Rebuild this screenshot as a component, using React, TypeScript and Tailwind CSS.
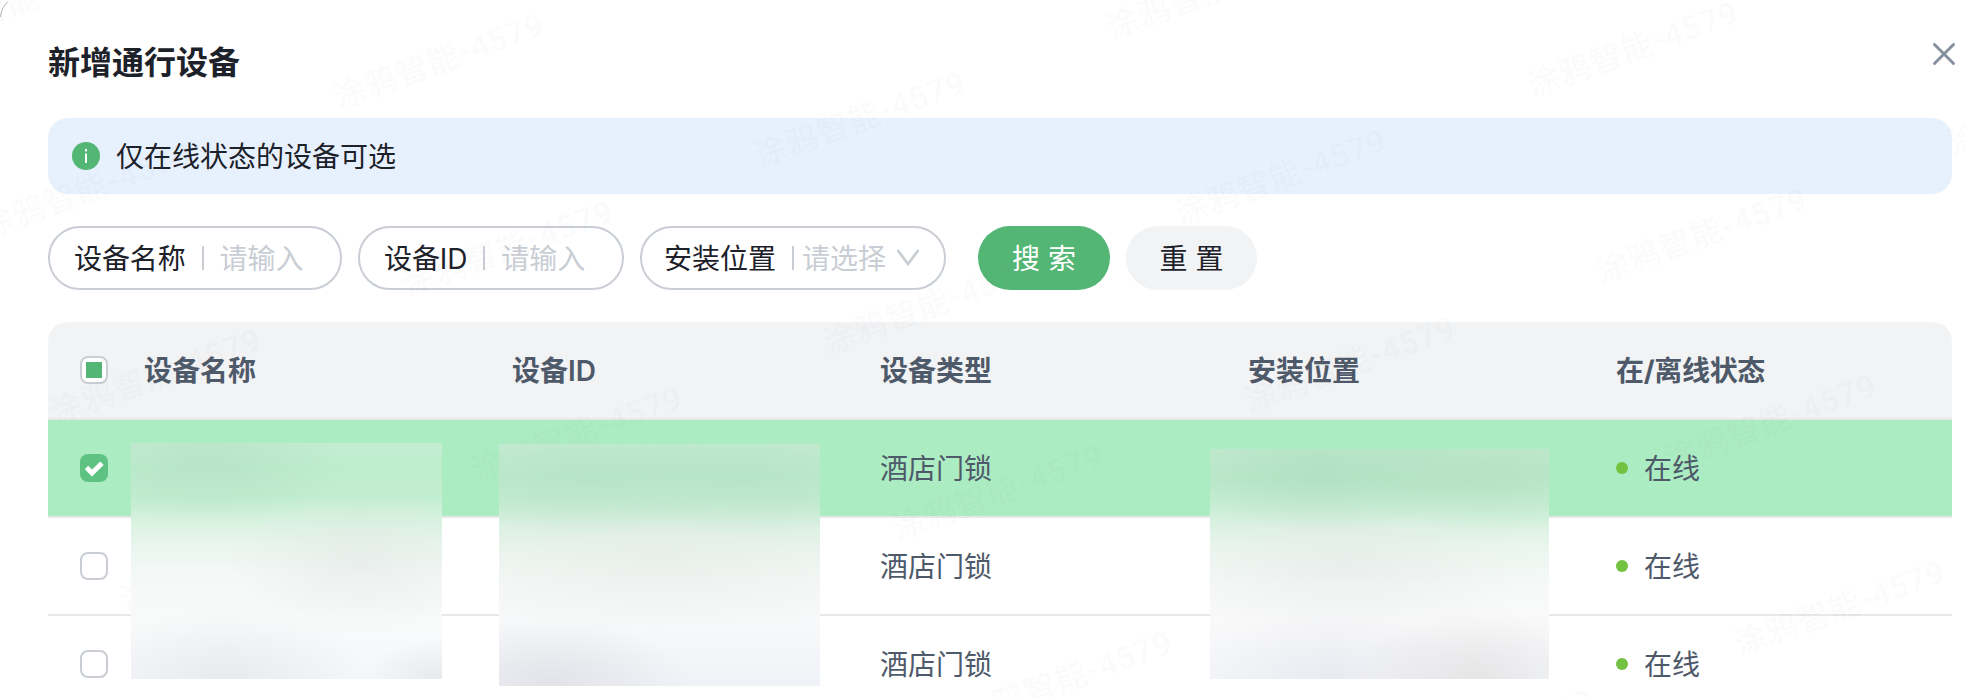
import { useState } from 'react'

type Device = {
  id: number
  type: string
  status: string
}

const DEVICES: Device[] = [
  { id: 1, type: '酒店门锁', status: '在线' },
  { id: 2, type: '酒店门锁', status: '在线' },
  { id: 3, type: '酒店门锁', status: '在线' }
]

const GRID = 'grid grid-cols-[80px_368px_368px_368px_368px_1fr] items-center'

// slanted lattice of watermark centers
const MARKS: { x: number; y: number }[] = []
for (let j = -4; j <= 4; j++) {
  for (let i = -2; i <= 6; i++) {
    const x = 18 + 421 * i + 69 * j
    const y = 3 + 58 * i + 186.5 * j
    if (x > -90 && x < 2060 && y > -40 && y < 740) MARKS.push({ x, y })
  }
}

function Watermark() {
  return (
    <div className="absolute inset-0 overflow-hidden pointer-events-none">
      {MARKS.map(({ x, y }) => (
        <span
          key={`${x}-${y}`}
          style={{ left: x, top: y }}
          className="absolute -translate-x-1/2 -translate-y-1/2 -rotate-[20deg] whitespace-nowrap text-[32px] font-medium leading-none tracking-[1.2px] text-[#8080800c] font-[Roboto,'Noto_Sans_CJK_SC',sans-serif]"
        >
          涂鸦智能-4579
        </span>
      ))}
    </div>
  )
}

function Checkbox({ state, onChange }: { state: 'on' | 'off' | 'mixed'; onChange: () => void }) {
  return (
    <button
      onClick={onChange}
      className={`ml-8 flex size-7 items-center justify-center rounded-lg ${state === 'on' ? 'bg-[#5ec282]' : 'border-2 border-[#c9cdd4] bg-white'}`}
    >
      {state === 'mixed' && <span className="size-4 bg-[#54b675]" />}
      {state === 'on' && (
        <svg viewBox="0 0 28 28" className="size-7" fill="none" stroke="white" strokeWidth="4.8">
          <path d="M6.5 13.5 L12 19 L22 9.2" />
        </svg>
      )}
    </button>
  )
}

function Field({ label, placeholder, className }: { label: string; placeholder: string; className: string }) {
  return (
    <label className={`flex h-16 items-center rounded-full border-2 border-[#c9cdd4] pl-6 ${className}`}>
      <span className="shrink-0 pt-0.5 tracking-[-0.1px]">{label}</span>
      <span className="ml-4 h-6 w-0.5 shrink-0 bg-[#c9cdd4]" />
      <input placeholder={placeholder} className="ml-4 w-24 min-w-0 pt-0.5 outline-none placeholder:text-[#c9cdd4]" />
    </label>
  )
}

export default function App() {
  const [selected, setSelected] = useState<number[]>([1])

  function toggle(id: number) {
    setSelected(prev => (prev.includes(id) ? prev.filter(item => item !== id) : [...prev, id]))
  }

  function toggleAll() {
    setSelected(selected.length === DEVICES.length ? [] : DEVICES.map(d => d.id))
  }

  const allState = selected.length === 0 ? 'off' : selected.length === DEVICES.length ? 'on' : 'mixed'

  return (
    <div className="relative h-[697px] w-[1966px] overflow-hidden bg-white pl-12 pr-3.5 text-[28px] leading-[44px] text-[#1d2129] font-[Inter,'Noto_Sans_CJK_SC',sans-serif]">
      <svg viewBox="0 0 20 20" className="absolute left-0 top-0 size-5" fill="none" stroke="#b5b5b5">
        <path d="M0.5 17 Q1.5 7 8 1.5" />
      </svg>

      <header className="flex h-[118px] items-start justify-between">
        <h1 className="mt-[41px] text-[32px] font-bold">新增通行设备</h1>
        <button className="mt-[42px] -mr-1">
          <svg viewBox="0 0 24 24" className="size-6" fill="none" stroke="#86909c" strokeWidth="3" strokeLinecap="round">
            <path d="M2.5 2.5 L21.5 21.5 M21.5 2.5 L2.5 21.5" />
          </svg>
        </button>
      </header>

      <div className="flex h-[76px] items-center rounded-[20px] bg-[#e7f1fe] pl-6">
        <svg viewBox="0 0 28 28" className="size-7">
          <circle cx="14" cy="14" r="14" fill="#54b675" />
          <rect x="13" y="7" width="2" height="2.4" fill="white" />
          <rect x="13" y="11.5" width="2" height="9.5" fill="white" />
        </svg>
        <span className="ml-4 pt-0.5">仅在线状态的设备可选</span>
      </div>

      <div className="mt-8 flex gap-4">
        <Field label="设备名称" placeholder="请输入" className="w-[294px]" />
        <Field label="设备ID" placeholder="请输入" className="w-[266px]" />
        <div className="flex h-16 w-[306px] items-center rounded-full border-2 border-[#c9cdd4] pl-[22px]">
          <span className="pt-0.5">安装位置</span>
          <span className="ml-4 h-6 w-0.5 bg-[#c9cdd4]" />
          <span className="ml-2 pt-0.5 text-[#c9cdd4]">请选择</span>
          <svg viewBox="0 0 24 20" className="ml-2.5 h-5 w-6" fill="none" stroke="#c9cdd4" strokeWidth="2.8">
            <path d="M1.5 2 L12 16 L22.5 2" />
          </svg>
        </div>
        <button className="ml-4 h-16 w-[132px] rounded-full bg-[#54b675] pt-0.5 text-white">搜 索</button>
        <button className="h-16 w-[131px] rounded-full bg-[#f2f3f5] pt-0.5">重 置</button>
      </div>

      <div className="mt-8 text-[#4e5969]">
        <div className={`${GRID} h-[98px] rounded-t-[20px] border-b-2 border-[#e8e8ea] bg-[#f2f3f5] font-bold`}>
          <Checkbox state={allState} onChange={toggleAll} />
          <span className="pl-4 pt-0.5">设备名称</span>
          <span className="pl-4 pt-0.5">设备<span className="font-semibold">ID</span></span>
          <span className="pl-4 pt-0.5">设备类型</span>
          <span className="pl-4 pt-0.5">安装位置</span>
          <span className="pl-4 pt-0.5 tracking-[-0.3px]">在/离线状态</span>
        </div>
        {DEVICES.map(device => (
          <div
            key={device.id}
            className={`${GRID} h-[98px] border-b-2 border-[#e8e8ea] ${selected.includes(device.id) ? 'bg-[#acecc2]' : ''}`}
          >
            <Checkbox state={selected.includes(device.id) ? 'on' : 'off'} onChange={() => toggle(device.id)} />
            <span className="col-start-4 pl-4 pt-0.5">{device.type}</span>
            <span className="col-start-6 flex items-center gap-4 pl-4">
              <span className="size-3 rounded-full bg-[#73c140]" />
              <span className="pt-0.5">{device.status}</span>
            </span>
          </div>
        ))}
      </div>

      <Watermark />

      {/* frosted panels over the private columns */}
      <div className="absolute left-[131px] top-[443px] h-[236px] w-[311px] bg-[radial-gradient(ellipse_140px_60px_at_24%_9%,#b4dfc3aa,#b4dfc300),radial-gradient(ellipse_130px_70px_at_74%_51%,#e0e4e277,#e0e4e200),radial-gradient(ellipse_150px_70px_at_30%_100%,#e8eaee,#e8eaee00),radial-gradient(ellipse_80px_40px_at_100%_100%,#e8e9ed,#e8e9ed00),linear-gradient(#c4edd2,#bdedcd_10%,#c2eed0_23%,#d8f2e0_33%,#e9f5ee_43%,#f4f8f6_55%,#f9fafa_75%,#f5f7fa)]" />
      <div className="absolute left-[499px] top-[444px] h-[242px] w-[321px] bg-[radial-gradient(ellipse_150px_60px_at_28%_13%,#b4e2c4aa,#b4e2c400),radial-gradient(ellipse_150px_60px_at_76%_13%,#b4e2c4aa,#b4e2c400),radial-gradient(ellipse_240px_75px_at_50%_48%,#e4e9e688,#e4e9e600),radial-gradient(ellipse_140px_70px_at_16%_100%,#e2e3e8,#e2e3e800),linear-gradient(#c5ebd2,#bce9cb_13%,#c4ecd1_24%,#daf1e2_34%,#eaf5ee_43%,#f5f8f6_55%,#f8f9fa_73%,#eff2f7)]" />
      <div className="absolute left-[1210px] top-[449px] h-[230px] w-[339px] bg-[radial-gradient(ellipse_150px_60px_at_33%_10%,#abdcbeaa,#abdcbe00),radial-gradient(ellipse_140px_60px_at_80%_10%,#b2dfc0aa,#b2dfc000),radial-gradient(ellipse_190px_75px_at_40%_50%,#e2e7e588,#e2e7e500),radial-gradient(ellipse_120px_70px_at_78%_100%,#e5e5e6,#e5e5e600),radial-gradient(ellipse_140px_70px_at_36%_100%,#eaebf1,#eaebf100),linear-gradient(#c2eacf,#bce9ca_13%,#c8eed4_24%,#dcf2e3_34%,#ebf6ef_43%,#f7f9f8_60%,#f9f9fa_75%,#f3f5f8)]" />
    </div>
  )
}
